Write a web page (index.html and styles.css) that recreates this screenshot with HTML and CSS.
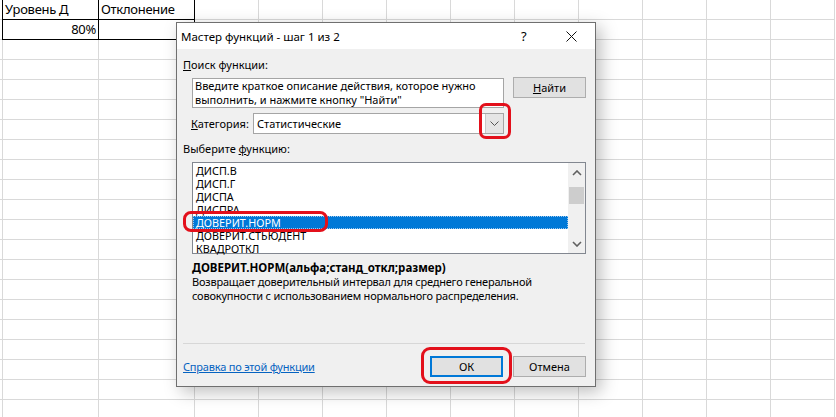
FILE: index.html
```html
<!DOCTYPE html>
<html lang="ru">
<head>
<meta charset="utf-8">
<title>Мастер функций</title>
<link rel="stylesheet" href="styles.css">
</head>
<body>
<div class="sheet">
  <div class="col col-a"><div class="edge"></div></div>
  <div class="col col-wide">
    <div class="cell">Уровень Д</div>
    <div class="cell num">80%</div>
  </div>
  <div class="col col-wide">
    <div class="cell">Отклонение</div>
    <div class="cell"></div>
  </div>
  <div class="col"></div><div class="col"></div><div class="col"></div><div class="col"></div><div class="col"></div>
  <div class="col"></div><div class="col"></div><div class="col"></div><div class="col"></div><div class="col"></div>
</div>

<div class="dialog">
  <div class="titlebar">
    <span class="title">Мастер функций - шаг 1 из 2</span>
    <span class="help">?</span>
    <svg class="close" width="11" height="11" viewBox="0 0 11 11"><path d="M0.5 0.5 L10.5 10.5 M10.5 0.5 L0.5 10.5" stroke="#111" stroke-width="1" fill="none"/></svg>
  </div>
  <div class="body">
    <div class="label"><u>П</u>оиск функции:</div>
    <div class="search-row">
      <div class="search-box">Введите краткое описание действия, которое нужно выполнить, и нажмите кнопку "Найти"</div>
      <div class="btn find"><u>Н</u>айти</div>
    </div>
    <div class="cat-row">
      <span class="cat-label"><u>К</u>атегория:</span>
      <div class="combo">
        <span class="combo-text">Статистические</span>
        <span class="combo-btn"><svg width="9" height="5" viewBox="0 0 9 5"><path d="M0.5 0.5 L4.5 4.5 L8.5 0.5" stroke="#555" stroke-width="1" fill="none"/></svg></span>
      </div>
    </div>
    <div class="label pick">Выберите <u>ф</u>ункцию:</div>
    <div class="listbox">
      <ul class="items">
        <li>ДИСП.В</li>
        <li>ДИСП.Г</li>
        <li>ДИСПА</li>
        <li>ДИСПРА</li>
        <li class="sel">ДОВЕРИТ.НОРМ</li>
        <li>ДОВЕРИТ.СТЬЮДЕНТ</li>
        <li>КВАДРОТКЛ</li>
      </ul>
      <div class="scrollbar">
        <svg class="arr" width="10" height="6" viewBox="0 0 10 6"><path d="M1 5 L5 1 L9 5" stroke="#606060" stroke-width="1.6" fill="none"/></svg>
        <div class="track"><div class="thumb"></div></div>
        <svg class="arr" width="10" height="6" viewBox="0 0 10 6"><path d="M1 1 L5 5 L9 1" stroke="#606060" stroke-width="1.6" fill="none"/></svg>
      </div>
    </div>
    <div class="sig">ДОВЕРИТ.НОРМ(альфа;станд_откл;размер)</div>
    <div class="desc">Возвращает доверительный интервал для среднего генеральной совокупности с использованием нормального распределения.</div>
    <div class="sep"></div>
    <div class="footer">
      <span class="link">Справка по этой функции</span>
      <div class="btn ok">ОК</div>
      <div class="btn cancel">Отмена</div>
    </div>
  </div>
</div>

<div class="mark mark-combo"></div>
<div class="mark mark-item"></div>
<div class="mark mark-ok"></div>
</body>
</html>
```

FILE: styles.css
```css
html, body {
  margin: 0;
  padding: 0;
  width: 836px;
  height: 417px;
  overflow: hidden;
  background: #fff;
}

/* ---------- spreadsheet ---------- */
.sheet {
  display: flex;
  height: 417px;
  font-family: "Noto Sans", "Open Sans", sans-serif;
  font-size: 13px;
  letter-spacing: -0.3px;
  color: #000;
}
.col {
  box-sizing: border-box;
  width: 64px;
  flex: none;
  height: 100%;
  border-right: 1px solid #d9d9d9;
  background: repeating-linear-gradient(to bottom, transparent 0 19px, #d9d9d9 19px 20px);
}
.col-a { width: 3px; }
.col-wide { width: 96px; }
.edge {
  height: 40px;
  margin-right: -1px;
  border-right: 1px solid #000;
}
.cell {
  box-sizing: border-box;
  height: 20px;
  margin-right: -1px;
  border-right: 1px solid #000;
  border-bottom: 1px solid #000;
  background: #fff;
  padding: 0 2px;
  line-height: 19px;
  white-space: nowrap;
  overflow: hidden;
}
.cell.num { text-align: right; }

/* ---------- dialog ---------- */
.dialog {
  position: absolute;
  left: 176px;
  top: 22px;
  width: 420px;
  height: 365px;
  box-sizing: border-box;
  border: 1px solid #6f6f6f;
  background: #f0f0f0;
  box-shadow: 5px 5px 16px rgba(0, 0, 0, 0.26);
  font-family: "Noto Sans", "Open Sans", sans-serif;
  font-size: 11px;
  color: #000;
  display: flex;
  flex-direction: column;
}
.titlebar {
  height: 26px;
  background: #fff;
  display: flex;
  align-items: center;
  padding-left: 4px;
}
.title { font-size: 11.5px; flex: 1; }
.help { font-size: 13px; width: 14px; margin-right: 31px; }
.close { margin-right: 18px; }

.body {
  flex: 1;
  display: flex;
  flex-direction: column;
  padding: 0 9px 0 6px;
}
.label { line-height: 16px; margin-top: 8px; }
.label.pick { margin-top: 7px; }

.search-row {
  display: flex;
  align-items: flex-start;
  margin-top: 4px;
}
.search-box {
  box-sizing: border-box;
  width: 312px;
  height: 30px;
  margin: 1px 0 0 9px;
  background: #fff;
  border: 1px solid #a5a5a5;
  padding: 0 2px;
  line-height: 14px;
}
.btn {
  box-sizing: border-box;
  width: 73px;
  height: 21px;
  background: #e1e1e1;
  border: 1px solid #adadad;
  text-align: center;
  line-height: 19px;
}
.find { margin-left: 9px; }

.cat-row {
  display: flex;
  align-items: center;
  margin-top: 5px;
}
.cat-label { margin-left: 8px; width: 62px; }
.combo {
  box-sizing: border-box;
  width: 251px;
  height: 21px;
  background: #fff;
  border: 1px solid #a5a5a5;
  display: flex;
  align-items: center;
}
.combo-text { flex: 1; padding-left: 3px; }
.combo-btn {
  box-sizing: border-box;
  width: 18px;
  height: 19px;
  background: #e5e5e5;
  border-left: 1px solid #c9c9c9;
  display: flex;
  align-items: center;
  justify-content: center;
}

.listbox {
  box-sizing: border-box;
  width: 394px;
  height: 92px;
  margin: 5px 0 0 9px;
  background: #fff;
  border: 1px solid #828790;
  display: flex;
}
.items {
  list-style: none;
  margin: 0;
  padding: 1px 0 0;
  flex: 1;
}
.items li {
  height: 13px;
  line-height: 13px;
  font-size: 10.8px;
  padding-left: 3px;
  white-space: nowrap;
}
.items li.sel {
  background: #0078d7;
  color: #fff;
  outline: 1px dotted #9cc7ef;
  outline-offset: -1px;
}
.scrollbar {
  width: 17px;
  background: #f0f0f0;
  display: flex;
  flex-direction: column;
  align-items: center;
}
.arr { margin: 7px 0 5px; }
.arr:last-child { margin: 5px 0 6px; }
.track { flex: 1; width: 100%; }
.thumb {
  margin: 6px 1px 0;
  height: 17px;
  background: #cdcdcd;
}

.sig {
  font-weight: bold;
  font-size: 11.5px;
  line-height: 14px;
  margin: 7px 0 0 9px;
}
.desc {
  line-height: 14px;
  width: 380px;
  margin-left: 9px;
  letter-spacing: -0.2px;
}
.sep {
  height: 1px;
  background: #d7d7d7;
  margin-top: 40px;
  width: 402px;
}
.footer {
  display: flex;
  align-items: center;
  margin-top: 12px;
}
.link {
  flex: 1;
  color: #0563c1;
  text-decoration: underline;
  letter-spacing: -0.2px;
}
.ok {
  border: 2px solid #0078d7;
  line-height: 17px;
  margin-right: 10px;
}

/* ---------- annotations ---------- */
.mark {
  position: absolute;
  box-sizing: border-box;
  border: 3px solid #e3101b;
  border-radius: 7px;
}
.mark-combo { left: 479px; top: 103px; width: 32px; height: 36px; }
.mark-item { left: 183px; top: 211px; width: 145px; height: 21px; border-radius: 8px; }
.mark-ok { left: 421px; top: 347px; width: 91px; height: 37px; border-radius: 9px; }
```
